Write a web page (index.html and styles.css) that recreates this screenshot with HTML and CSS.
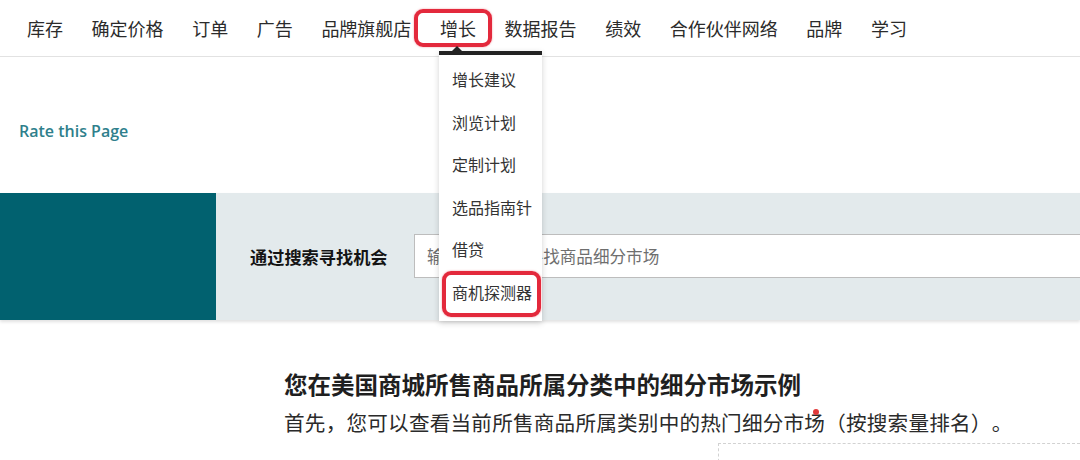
FILE: index.html
```html
<!DOCTYPE html>
<html lang="zh-CN">
<head>
<meta charset="utf-8">
<title>商机探测器</title>
<link rel="stylesheet" href="styles.css">
</head>
<body>
<header class="topnav">
  <nav class="nav-list">
    <span class="nav-item">库存</span>
    <span class="nav-item">确定价格</span>
    <span class="nav-item">订单</span>
    <span class="nav-item">广告</span>
    <span class="nav-item">品牌旗舰店</span>
    <span class="nav-item nav-item--open">增长
      <span class="mark mark--nav"></span>
      <div class="dropdown">
        <span class="dropdown-notch"></span>
        <div class="dd-item">增长建议</div>
        <div class="dd-item">浏览计划</div>
        <div class="dd-item">定制计划</div>
        <div class="dd-item">选品指南针</div>
        <div class="dd-item">借贷</div>
        <div class="dd-item dd-item--marked">商机探测器<span class="mark mark--dd"></span></div>
      </div>
    </span>
    <span class="nav-item">数据报告</span>
    <span class="nav-item">绩效</span>
    <span class="nav-item">合作伙伴网络</span>
    <span class="nav-item">品牌</span>
    <span class="nav-item">学习</span>
  </nav>
</header>

<div class="rate">Rate this Page</div>

<section class="search-panel">
  <div class="panel-accent"></div>
  <div class="panel-body">
    <label class="panel-label">通过搜索寻找机会</label>
    <div class="panel-input">输入关键词以寻找商品细分市场</div>
  </div>
</section>

<section class="content">
  <h2 class="content-title">您在美国商城所售商品所属分类中的细分市场示例</h2>
  <p class="content-sub">首先，您可以查看当前所售商品所属类别中的热门细分市场（按搜索量排名）。<span class="red-dot"></span></p>
  <div class="dashed-box"></div>
</section>
</body>
</html>
```

FILE: styles.css
```css
* { box-sizing: border-box; }

html, body {
  margin: 0;
  padding: 0;
  background: #ffffff;
  overflow: hidden;
}

body {
  width: 1080px;
  height: 460px;
  font-family: "Noto Sans CJK SC", "Noto Sans", sans-serif;
  color: #2b2b2b;
  text-spacing-trim: space-all;
}

.topnav {
  height: 57px;
  border-bottom: 1px solid #e2e2e2;
}

.nav-list {
  display: flex;
  align-items: center;
  height: 56px;
  padding-left: 27px;
  gap: 28.6px;
}

.nav-item {
  position: relative;
  font-size: 18px;
  line-height: 56px;
  color: #2b2b2b;
  white-space: nowrap;
}

.mark {
  position: absolute;
  border: 4px solid #e3293c;
  border-radius: 9px;
  box-shadow: 0 0 2px rgba(227, 41, 60, 0.5);
  pointer-events: none;
}

.mark--nav {
  left: -26px;
  top: 9px;
  width: 78px;
  height: 38px;
}

.dropdown {
  position: absolute;
  left: -1px;
  top: 51px;
  width: 103px;
  background: #ffffff;
  border-top: 4px solid #232323;
  box-shadow: 0 2px 6px rgba(0, 0, 0, 0.18);
  padding: 3px 0 7px;
  z-index: 5;
}

.dropdown-notch {
  position: absolute;
  left: 12px;
  top: -9px;
  width: 0;
  height: 0;
  border-left: 6px solid transparent;
  border-right: 6px solid transparent;
  border-bottom: 6px solid #232323;
}

.dd-item {
  position: relative;
  height: 42.6px;
  line-height: 42.6px;
  padding-left: 13px;
  font-size: 16px;
  color: #333333;
}

.mark--dd {
  left: 3px;
  top: 0px;
  width: 99px;
  height: 46px;
}

.rate {
  margin: 64px 0 0 19px;
  font-family: "Open Sans", "Noto Sans", sans-serif;
  font-size: 16px;
  line-height: 20px;
  height: 20px;
  color: #2f7f8c;
  font-weight: 600;
}

.search-panel {
  display: grid;
  grid-template-columns: 216px 1fr;
  height: 127px;
  margin-top: 52px;
  box-shadow: 0 2px 3px rgba(0, 0, 0, 0.12);
}

.panel-accent {
  background: #01616f;
}

.panel-body {
  background: #e3eaec;
  display: flex;
  align-items: center;
  padding-left: 34px;
}

.panel-label {
  width: 164px;
  font-size: 17.2px;
  font-weight: 700;
  color: #141414;
}

.panel-input {
  flex: 1;
  height: 44px;
  margin-top: -2px;
  background: #ffffff;
  border: 1px solid #bdbdbd;
  border-right: none;
  padding-left: 12px;
  display: flex;
  align-items: center;
  font-size: 16.6px;
  color: #6e6e6e;
}

.content {
  position: relative;
  padding-left: 284px;
  padding-top: 48px;
}

.content-title {
  margin: 0;
  font-size: 23.5px;
  line-height: 32px;
  font-weight: 700;
  color: #1f1f1f;
}

.content-sub {
  position: relative;
  margin: 7px 0 0;
  font-size: 20.6px;
  letter-spacing: 0.22px;
  line-height: 30px;
  color: #2a2a2a;
  white-space: nowrap;
}

.red-dot {
  position: absolute;
  left: 529px;
  top: 2px;
  width: 6px;
  height: 6px;
  border-radius: 50%;
  background: #e23a3a;
}

.dashed-box {
  margin: 6px 0 0 434px;
  height: 40px;
  border-top: 1px dashed #d2d2d2;
  border-left: 1px dashed #d2d2d2;
}
```
